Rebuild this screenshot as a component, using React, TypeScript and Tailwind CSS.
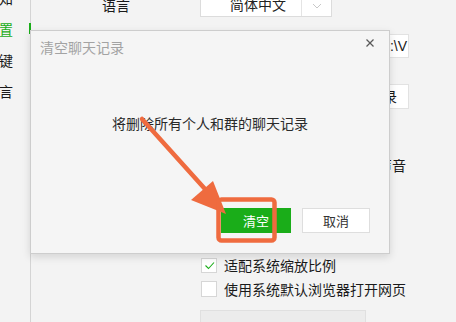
import React from "react";

const FONT = '"Microsoft YaHei", "Noto Sans CJK SC", "Noto Sans", sans-serif';

function Check() {
  return (
    <svg width="13" height="13" viewBox="0 0 13 13">
      <polyline points="2.5,6.5 5.5,9.5 11,3.5" fill="none" stroke="#1aad19" strokeWidth="1.1" />
    </svg>
  );
}

export default function App() {
  return (
    <div
      className="relative w-[456px] h-[322px] overflow-hidden bg-[#f3f3f3] flex text-[#1a1a1a]"
      style={{ fontFamily: FONT }}
    >
      {/* sidebar */}
      <div className="relative w-[31px] shrink-0 border-r border-[#d4d4d4] flex flex-col">
        <div className="mt-[-18px] flex flex-col">
          {["消息通知", "通用设置", "快捷按键", "多语言"].map((t, i) => (
            <div key={t} className="h-[31px] w-[13px] flex items-center justify-end">
              <span
                className={
                  "shrink-0 whitespace-nowrap text-[14px] leading-[20px] " +
                  (i === 1 ? "text-[#1aad19]" : "text-[#1a1a1a]")
                }
              >
                {t}
              </span>
            </div>
          ))}
        </div>
        <div className="absolute right-[-1px] top-[23px] w-[2px] h-[11px] bg-[#1aad19]" />
      </div>

      {/* main settings content */}
      <div className="flex-1 flex flex-col">
        {/* 语言 */}
        <div className="mt-[-5px] h-[22px] flex items-center">
          <div className="w-[169px] pl-[71px] text-[14px] leading-[20px] mt-[-3px]">语言</div>
          <div className="flex h-[22px] border border-[#dcdcdc] bg-white">
            <div className="w-[100px] pl-[29px] text-[14px] leading-[20px] text-[#222] mt-[-2px]">简体中文</div>
            <div className="w-[30px] border-l border-[#e4e4e4] flex items-center justify-center">
              <svg width="10" height="6" viewBox="0 0 10 6">
                <polyline points="1,1 5,5 9,1" fill="none" stroke="#c8c8c8" strokeWidth="1" />
              </svg>
            </div>
          </div>
        </div>

        {/* 路径 */}
        <div className="mt-[17px] h-[24px] flex">
          <div className="w-[169px]" />
          <div className="w-[209px] h-[24px] bg-white border border-[#e2e2e2] flex items-center justify-end overflow-hidden pr-[1px]">
            <span className="shrink-0 whitespace-nowrap text-[14px] text-[#1a1a1a]" style={{ fontFamily: '"Liberation Sans", sans-serif' }}>
              C:\Users\Documents\WeChat Files:\V
            </span>
          </div>
        </div>

        {/* 清空聊天记录 button */}
        <div className="mt-[26px] h-[25px] flex">
          <div className="w-[169px]" />
          <div className="w-[209px] flex justify-end">
            <div className="w-[108px] h-[25px] bg-white border border-[#e2e2e2] flex items-center justify-center text-[14px] text-[#1a1a1a]">
              清空聊天记录
            </div>
          </div>
        </div>

        {/* 声音 */}
        <div className="mt-[46px] h-[20px] flex">
          <div className="w-[169px]" />
          <div className="w-[206px] flex justify-end items-center text-[14px] leading-[20px]">新消息通知声音</div>
        </div>

        {/* checkboxes */}
        <div className="mt-[82px] h-[16px] flex items-center">
          <div className="w-[170px]" />
          <div className="w-[16px] h-[15px] bg-white border border-[#d6d6d6] flex items-center justify-center">
            <Check />
          </div>
          <span className="ml-[7px] text-[14px] leading-[20px] whitespace-nowrap">适配系统缩放比例</span>
        </div>
        <div className="mt-[8px] h-[16px] flex items-center">
          <div className="w-[170px]" />
          <div className="w-[16px] h-[16px] bg-white border border-[#d6d6d6]" />
          <span className="ml-[7px] text-[14px] leading-[20px] whitespace-nowrap">使用系统默认浏览器打开网页</span>
        </div>
        <div className="mt-[13px] h-[20px] flex">
          <div className="w-[169px]" />
          <div className="w-[166px] h-[20px] bg-[#ececec] border border-[#e0e0e0]" />
        </div>
      </div>

      {/* dialog */}
      <div className="absolute left-[30px] top-[30px] w-[360px] h-[224px] bg-[#f5f5f5] border border-[#cdcdcd] shadow-[0_3px_8px_rgba(0,0,0,0.13)] flex flex-col">
        <div className="h-[34px] pl-[9px] pt-[6px] text-[14px] leading-[20px] text-[#a3a3a3]">清空聊天记录</div>
        <div className="absolute left-[335px] top-[8px] w-[8px] h-[8px]">
          <svg width="8" height="8" viewBox="0 0 8 8">
            <line x1="0.5" y1="0.5" x2="7.5" y2="7.5" stroke="#5a5a5a" strokeWidth="1.3" />
            <line x1="7.5" y1="0.5" x2="0.5" y2="7.5" stroke="#5a5a5a" strokeWidth="1.3" />
          </svg>
        </div>
        <div className="mt-[48px] text-center text-[14px] leading-[20px] text-[#2a2a2a]">
          将删除所有个人和群的聊天记录
        </div>
        <div className="mt-[75px] flex justify-end gap-[11px] pr-[19px]">
          <div className="w-[70px] h-[25px] bg-[#1aad19] text-white text-[13px] flex items-center justify-center">清空</div>
          <div className="w-[68px] h-[25px] bg-white border border-[#dedede] text-[#333] text-[13px] flex items-center justify-center">取消</div>
        </div>
      </div>

      {/* annotation overlay */}
      <svg className="absolute left-0 top-0 pointer-events-none" width="456" height="322" viewBox="0 0 456 322">
        <line x1="142" y1="119" x2="205" y2="189" stroke="#ef6b3f" strokeWidth="4.5" strokeLinecap="round" />
        <polygon points="191,200 213,181 226,214" fill="#ef6b3f" />
        <rect x="218.5" y="199.5" width="56" height="41" rx="3" fill="none" stroke="#ef6b3f" strokeWidth="4.5" />
      </svg>
    </div>
  );
}
